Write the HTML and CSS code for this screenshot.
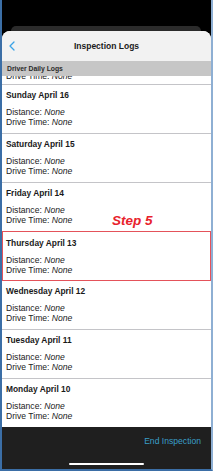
FILE: index.html
```html
<!DOCTYPE html>
<html lang="en">

<head>
    <meta charset="UTF-8">
    <meta name="viewport" content="width=device-width, initial-scale=1.0">
    <title>Inspection Logs</title>
    <link rel="stylesheet" href="styles.css">
</head>

<body>
    <div class="frame">
        <div class="status"></div>
        <div class="back-card"></div>
        <div class="sheet">
            <div class="nav">
                <a class="back" href="javascript:;">
                    <svg width="6" height="10" viewBox="0 0 6 10"><path d="M5 1 L1 5 L5 9" fill="none" stroke="#3aa3e6" stroke-width="1.3" stroke-linecap="round" stroke-linejoin="round"/></svg>
                </a>
                <div class="nav-title">Inspection Logs</div>
                <div></div>
            </div>
            <div class="section">Driver Daily Logs</div>
            <div class="list">
                <div class="peek">
                    <div class="line">Drive Time: <i>None</i></div>
                </div>
                <div class="day">
                    <div class="day-title">Sunday April 16</div>
                    <div class="line">Distance: <i>None</i></div>
                    <div class="line">Drive Time: <i>None</i></div>
                </div>
                <div class="day">
                    <div class="day-title">Saturday April 15</div>
                    <div class="line">Distance: <i>None</i></div>
                    <div class="line">Drive Time: <i>None</i></div>
                </div>
                <div class="day">
                    <div class="day-title">Friday April 14</div>
                    <div class="line">Distance: <i>None</i></div>
                    <div class="line">Drive Time: <i>None</i></div>
                </div>
                <div class="day marked">
                    <span class="step">Step 5</span>
                    <div class="day-title">Thursday April 13</div>
                    <div class="line">Distance: <i>None</i></div>
                    <div class="line">Drive Time: <i>None</i></div>
                </div>
                <div class="day">
                    <div class="day-title">Wednesday April 12</div>
                    <div class="line">Distance: <i>None</i></div>
                    <div class="line">Drive Time: <i>None</i></div>
                </div>
                <div class="day">
                    <div class="day-title">Tuesday April 11</div>
                    <div class="line">Distance: <i>None</i></div>
                    <div class="line">Drive Time: <i>None</i></div>
                </div>
                <div class="day last">
                    <div class="day-title">Monday April 10</div>
                    <div class="line">Distance: <i>None</i></div>
                    <div class="line">Drive Time: <i>None</i></div>
                </div>
            </div>
            <div class="toolbar">
                <a class="end" href="javascript:;">End Inspection</a>
                <div class="home-bar"></div>
            </div>
        </div>
    </div>
</body>

</html>
```

FILE: styles.css
```css
* {
    margin: 0;
    padding: 0;
    box-sizing: border-box;
}

body {
    background: #fff;
    font-family: "Liberation Sans", Arial, sans-serif;
    color: #1c1c1c;
}

a {
    text-decoration: none;
}

.frame {
    display: flex;
    flex-direction: column;
    width: 213px;
    height: 471px;
    background: #000;
    border-left: 2px solid #3b6ea6;
    border-right: 2px solid #8eafd3;
    border-bottom: 2px solid #3b6ea6;
}

.status {
    height: 26px;
}

.back-card {
    height: 5px;
    margin: 0 10px 0 9px;
    background: #2b2b2b;
    border-radius: 6px 6px 0 0;
}

.sheet {
    flex: 1;
    display: flex;
    flex-direction: column;
    background: #fff;
    border-radius: 8px 8px 0 0;
    overflow: hidden;
}

.nav {
    display: grid;
    grid-template-columns: 30px 1fr 30px;
    align-items: center;
    height: 30px;
    background: #f2f2f2;
}

.back {
    display: flex;
    padding-left: 7px;
}

.nav-title {
    text-align: center;
    font-size: 8.5px;
    font-weight: bold;
    color: #1a1a1a;
}

.section {
    height: 15px;
    line-height: 15px;
    padding-left: 5px;
    background: #c6c6c6;
    font-size: 6.8px;
    font-weight: bold;
    color: #2a2a2a;
}

.list {
    flex: 1;
}

.peek {
    height: 9px;
    overflow: hidden;
    padding-left: 4px;
    border-bottom: 1px solid #c4c4c8;
}

.peek .line {
    margin-top: -5px;
}

.day {
    position: relative;
    height: 49px;
    padding: 5px 0 0 4px;
    border-bottom: 1px solid #c4c4c8;
}

.day.last {
    height: 48px;
    border-bottom: none;
}

.day-title {
    height: 11px;
    line-height: 11px;
    margin-bottom: 6px;
    font-size: 8.4px;
    font-weight: bold;
    color: #1a1a1a;
}

.line {
    height: 10px;
    line-height: 10px;
    font-size: 8.6px;
    color: #222;
}

.marked {
    margin-top: -1px;
    padding-top: 6px;
    height: 50px;
    border: 1.5px solid #e4525a;
    padding-left: 3px;
}

.step {
    position: absolute;
    left: 109px;
    bottom: calc(100% + 4px);
    font-size: 13.5px;
    line-height: 14px;
    font-weight: bold;
    font-style: italic;
    color: #e8222c;
}

.toolbar {
    display: flex;
    flex-direction: column;
    align-items: center;
    height: 42px;
    background: #1f1f1f;
}

.end {
    align-self: flex-end;
    margin: 9px 10px 0 0;
    font-size: 8.6px;
    line-height: 10px;
    color: #3a9ec8;
}

.home-bar {
    width: 75px;
    height: 2px;
    margin-top: 17px;
    border-radius: 1px;
    background: #fff;
}
```
